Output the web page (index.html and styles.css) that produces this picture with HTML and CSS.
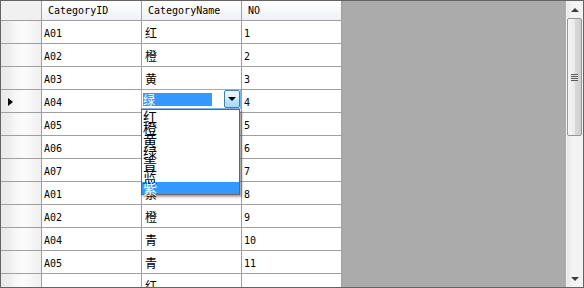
FILE: index.html
```html
<!DOCTYPE html>
<html>
<head>
<meta charset="utf-8">
<link rel="stylesheet" href="styles.css">
</head>
<body>
<div class="frame">
  <div class="grid">
    <div class="hcell corner"></div>
    <div class="hcell">CategoryID</div>
    <div class="hcell">CategoryName</div>
    <div class="hcell">NO</div>

    <div class="rh"></div><div class="cell">A01</div><div class="cell cn">红</div><div class="cell">1</div>
    <div class="rh"></div><div class="cell">A02</div><div class="cell cn">橙</div><div class="cell">2</div>
    <div class="rh"></div><div class="cell">A03</div><div class="cell cn">黄</div><div class="cell">3</div>
    <div class="rh"><span class="arrow"></span></div><div class="cell">A04</div>
    <div class="cell edit">
      <div class="combo">
        <span class="sel">绿</span>
        <span class="btn"><span class="tri"></span></span>
      </div>
      <div class="list">
        <div class="item">红</div>
        <div class="item">橙</div>
        <div class="item">黄</div>
        <div class="item">绿</div>
        <div class="item">青</div>
        <div class="item">蓝</div>
        <div class="item on">紫</div>
      </div>
    </div>
    <div class="cell">4</div>
    <div class="rh"></div><div class="cell">A05</div><div class="cell cn"></div><div class="cell">5</div>
    <div class="rh"></div><div class="cell">A06</div><div class="cell cn"></div><div class="cell">6</div>
    <div class="rh"></div><div class="cell">A07</div><div class="cell cn"></div><div class="cell">7</div>
    <div class="rh"></div><div class="cell">A01</div><div class="cell cn">紫</div><div class="cell">8</div>
    <div class="rh"></div><div class="cell">A02</div><div class="cell cn">橙</div><div class="cell">9</div>
    <div class="rh"></div><div class="cell">A04</div><div class="cell cn">青</div><div class="cell">10</div>
    <div class="rh"></div><div class="cell">A05</div><div class="cell cn">青</div><div class="cell">11</div>
    <div class="rh"></div><div class="cell"></div><div class="cell cn">红</div><div class="cell"></div>
  </div>
  <div class="empty"></div>
  <div class="vscroll">
    <div class="sbtn"><span class="up"></span></div>
    <div class="thumb"><span class="grip"></span></div>
    <div class="track"></div>
    <div class="sbtn"><span class="down"></span></div>
  </div>
</div>
</body>
</html>
```

FILE: styles.css
```css
html, body {
  margin: 0;
  padding: 0;
  background: #ffffff;
}

.frame {
  width: 584px;
  height: 288px;
  box-sizing: border-box;
  border: 1px solid #646464;
  display: flex;
  background: #ababab;
  overflow: hidden;
}

.grid {
  display: grid;
  grid-template-columns: 41px 100px 100px 100px;
  grid-auto-rows: 23px;
  grid-template-rows: 20px;
  width: 341px;
  background: #ffffff;
  align-self: flex-start;
  font-family: "DejaVu Sans Mono", "Liberation Mono", monospace;
  font-size: 10px;
  color: #000;
}

.hcell {
  box-sizing: border-box;
  border-right: 1px solid #a0a0a0;
  border-bottom: 1px solid #a0a0a0;
  background: linear-gradient(#ffffff, #f7f8fa 50%, #eef0f3);
  padding: 4px 0 0 6px;
  white-space: nowrap;
  overflow: hidden;
}

.hcell.corner {
  background: #f0f0f0;
}

.rh {
  box-sizing: border-box;
  border-right: 1px solid #a0a0a0;
  border-bottom: 1px solid #a0a0a0;
  background: linear-gradient(to right, #e8e8e8 0, #eeeeee 20%, #f9f9f9 40%, #fbfbfb 60%, #efefef 100%);
  position: relative;
}

.arrow {
  position: absolute;
  left: 7px;
  top: 8px;
  width: 0;
  height: 0;
  border-top: 4px solid transparent;
  border-bottom: 4px solid transparent;
  border-left: 5px solid #000;
}

.cell {
  box-sizing: border-box;
  border-right: 1px solid #a0a0a0;
  border-bottom: 1px solid #a0a0a0;
  padding: 7px 0 0 2px;
  white-space: nowrap;
}

.cell.cn {
  font-family: "Noto Sans CJK SC", sans-serif;
  font-size: 12px;
  padding: 3px 0 0 3px;
}

.cell.edit {
  position: relative;
  padding: 0;
  overflow: visible;
}

.combo {
  position: absolute;
  left: -1px;
  top: -1px;
  width: 100px;
  height: 20px;
  box-sizing: border-box;
  border: 1px solid #7eb4ea;
  background: #ffffff;
  display: flex;
  align-items: center;
}

.sel {
  margin-left: 1px;
  width: 69px;
  height: 13px;
  background: #3399ff;
  color: #ffffff;
  font-family: "Noto Sans CJK SC", sans-serif;
  font-size: 12px;
  line-height: 13px;
}

.btn {
  margin-left: auto;
  width: 16px;
  height: 18px;
  box-sizing: border-box;
  border: 1px solid #3c7fb1;
  border-radius: 2px;
  background: linear-gradient(#eaf6fd, #d9f0fc 50%, #bee6fd 51%, #a7d9f5);
  display: flex;
  align-items: center;
  justify-content: center;
}

.tri {
  width: 0;
  height: 0;
  border-left: 4px solid transparent;
  border-right: 4px solid transparent;
  border-top: 4px solid #000;
}

.list {
  position: absolute;
  left: -1px;
  top: 19px;
  width: 99px;
  box-sizing: border-box;
  border: 1px solid #646464;
  background: #ffffff;
  box-shadow: 2px 2px 2px rgba(0, 0, 0, 0.35);
  font-family: "Noto Sans CJK SC", sans-serif;
  font-size: 14px;
  z-index: 2;
}

.item {
  height: 12px;
  line-height: 12px;
  padding-left: 1px;
}

.item.on {
  background: #3399ff;
  color: #ffffff;
}

.empty {
  flex: 1;
  background: #ababab;
  border-right: 1px solid #f4f4f4;
}

.vscroll {
  width: 16px;
  display: flex;
  flex-direction: column;
  background: linear-gradient(to right, #e6e6e6, #f3f3f3 30%, #f3f3f3);
}

.sbtn {
  height: 17px;
  display: flex;
  align-items: center;
  justify-content: center;
}

.up {
  width: 0;
  height: 0;
  border-left: 4px solid transparent;
  border-right: 4px solid transparent;
  border-bottom: 4px solid #3c3c3c;
}

.down {
  width: 0;
  height: 0;
  border-left: 4px solid transparent;
  border-right: 4px solid transparent;
  border-top: 4px solid #3c3c3c;
}

.thumb {
  height: 118px;
  margin: 0 1px 0 0;
  box-sizing: border-box;
  border: 1px solid #979797;
  border-radius: 2px;
  background: linear-gradient(to right, #f4f4f4, #ebebeb 50%, #d9d9d9 51%, #cfcfcf);
  display: flex;
  align-items: center;
  justify-content: center;
}

.grip {
  width: 7px;
  height: 7px;
  background: repeating-linear-gradient(#5a5a5a 0, #5a5a5a 1px, #e8e8e8 1px, #e8e8e8 2px);
}

.track {
  flex: 1;
}
```
